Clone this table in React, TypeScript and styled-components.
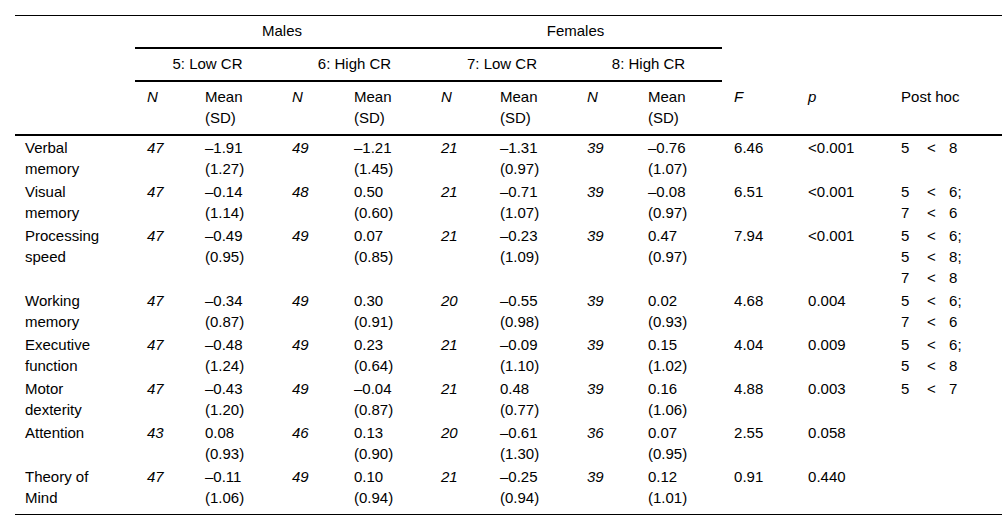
import styled, { createGlobalStyle } from 'styled-components';

const GlobalStyle = createGlobalStyle`
  body {
    margin: 0;
    background: #fff;
    color: #000;
    font-family: 'Liberation Sans', Arial, sans-serif;
  }
`;

const Page = styled.div`
  padding: 15px 0 0 15px;
`;

const Table = styled.table`
  width: 987px;
  table-layout: fixed;
  border-collapse: separate;
  border-spacing: 0;
  border-top: 1px solid #000;
  border-bottom: 1px solid #000;
  font-size: 15px;
  line-height: 21px;
`;

const Head = styled.th<{ $rule?: boolean; $center?: boolean; $italic?: boolean; $pad?: string }>`
  font-weight: normal;
  text-align: ${({ $center }) => ($center ? 'center' : 'left')};
  font-style: ${({ $italic }) => ($italic ? 'italic' : 'normal')};
  vertical-align: top;
  padding: ${({ $pad }) => $pad || '4px 12px 6px'};
  border-bottom: ${({ $rule }) => ($rule ? '2px solid #000' : '0')};
`;

const Cell = styled.td<{ $italic?: boolean; $label?: boolean; $last?: boolean }>`
  vertical-align: top;
  padding: ${({ $label, $last }) => `1px 12px ${$last ? 6 : 1}px ${$label ? 10 : 12}px`};
  font-style: ${({ $italic }) => ($italic ? 'italic' : 'normal')};
`;

const PostHoc = styled.div`
  display: grid;
  grid-template-columns: 26px 22px auto;
`;

type Group = [number, string, string];

interface Row {
  label: string[];
  groups: Group[];
  f: string;
  p: string;
  post: [string, string][];
}

const rows: Row[] = [
  {
    label: ['Verbal', 'memory'],
    groups: [[47, '–1.91', '(1.27)'], [49, '–1.21', '(1.45)'], [21, '–1.31', '(0.97)'], [39, '–0.76', '(1.07)']],
    f: '6.46',
    p: '<0.001',
    post: [['5', '8']],
  },
  {
    label: ['Visual', 'memory'],
    groups: [[47, '–0.14', '(1.14)'], [48, '0.50', '(0.60)'], [21, '–0.71', '(1.07)'], [39, '–0.08', '(0.97)']],
    f: '6.51',
    p: '<0.001',
    post: [['5', '6;'], ['7', '6']],
  },
  {
    label: ['Processing', 'speed'],
    groups: [[47, '–0.49', '(0.95)'], [49, '0.07', '(0.85)'], [21, '–0.23', '(1.09)'], [39, '0.47', '(0.97)']],
    f: '7.94',
    p: '<0.001',
    post: [['5', '6;'], ['5', '8;'], ['7', '8']],
  },
  {
    label: ['Working', 'memory'],
    groups: [[47, '–0.34', '(0.87)'], [49, '0.30', '(0.91)'], [20, '–0.55', '(0.98)'], [39, '0.02', '(0.93)']],
    f: '4.68',
    p: '0.004',
    post: [['5', '6;'], ['7', '6']],
  },
  {
    label: ['Executive', 'function'],
    groups: [[47, '–0.48', '(1.24)'], [49, '0.23', '(0.64)'], [21, '–0.09', '(1.10)'], [39, '0.15', '(1.02)']],
    f: '4.04',
    p: '0.009',
    post: [['5', '6;'], ['5', '8']],
  },
  {
    label: ['Motor', 'dexterity'],
    groups: [[47, '–0.43', '(1.20)'], [49, '–0.04', '(0.87)'], [21, '0.48', '(0.77)'], [39, '0.16', '(1.06)']],
    f: '4.88',
    p: '0.003',
    post: [['5', '7']],
  },
  {
    label: ['Attention'],
    groups: [[43, '0.08', '(0.93)'], [46, '0.13', '(0.90)'], [20, '–0.61', '(1.30)'], [36, '0.07', '(0.95)']],
    f: '2.55',
    p: '0.058',
    post: [],
  },
  {
    label: ['Theory of', 'Mind'],
    groups: [[47, '–0.11', '(1.06)'], [49, '0.10', '(0.94)'], [21, '–0.25', '(0.94)'], [39, '0.12', '(1.01)']],
    f: '0.91',
    p: '0.440',
    post: [],
  },
];

const widths = [120, 58, 87, 62, 87, 59, 87, 61, 86, 74, 93, 113];
const groupNames = ['5: Low CR', '6: High CR', '7: Low CR', '8: High CR'];

export default function App() {
  return (
    <Page>
      <GlobalStyle />
      <Table>
        <colgroup>
          {widths.map((w, i) => (
            <col key={i} style={{ width: w }} />
          ))}
        </colgroup>
        <thead>
          <tr>
            <Head />
            <Head colSpan={4} $center $rule>
              Males
            </Head>
            <Head colSpan={4} $center $rule>
              Females
            </Head>
            <Head colSpan={3} />
          </tr>
          <tr>
            <Head $pad="4px 12px 6px" />
            {groupNames.map(g => (
              <Head key={g} colSpan={2} $center $rule $pad="4px 12px 6px">
                {g}
              </Head>
            ))}
            <Head colSpan={3} $pad="4px 12px 6px" />
          </tr>
          <tr>
            <Head $rule $pad="4px 12px 6px" />
            {groupNames.map(g => [
              <Head key={g + 'n'} $rule $italic>
                N
              </Head>,
              <Head key={g + 'm'} $rule>
                Mean
                <br />
                (SD)
              </Head>,
            ])}
            <Head $rule $italic>
              F
            </Head>
            <Head $rule $italic>
              p
            </Head>
            <Head $rule>Post hoc</Head>
          </tr>
        </thead>
        <tbody>
          {rows.map((r, ri) => {
            const last = ri === rows.length - 1;
            return (
              <tr key={ri}>
                <Cell $label $last={last}>
                  {r.label.map((l, i) => (
                    <div key={i}>{l}</div>
                  ))}
                </Cell>
                {r.groups.map(([n, mean, sd], gi) => [
                  <Cell key={gi + 'n'} $italic $last={last}>
                    {n}
                  </Cell>,
                  <Cell key={gi + 'm'} $last={last}>
                    {mean}
                    <br />
                    {sd}
                  </Cell>,
                ])}
                <Cell $last={last}>{r.f}</Cell>
                <Cell $last={last}>{r.p}</Cell>
                <Cell $last={last}>
                  <PostHoc>
                    {r.post.map(([a, b], i) => [
                      <span key={i + 'a'}>{a}</span>,
                      <span key={i + 'l'}>&lt;</span>,
                      <span key={i + 'b'}>{b}</span>,
                    ])}
                  </PostHoc>
                </Cell>
              </tr>
            );
          })}
        </tbody>
      </Table>
    </Page>
  );
}
